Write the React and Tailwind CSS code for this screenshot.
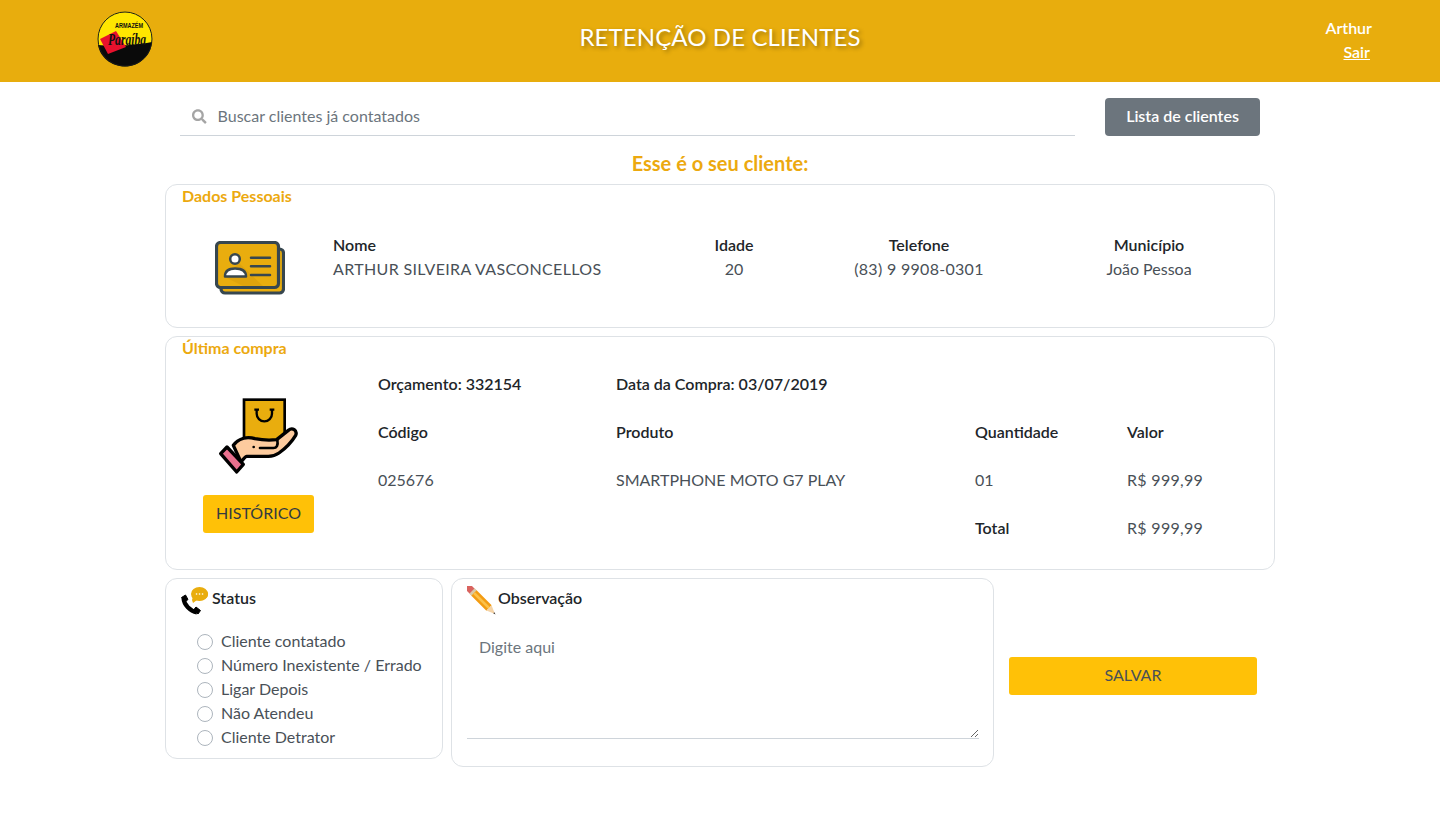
import { FaSearch } from "react-icons/fa";

const Logo = () => (
	<svg width="56" height="56" viewBox="0 0 56 56" className="overflow-visible">
		<circle cx="28" cy="28" r="27.5" fill="#ffe600" />
		<path d="M1 34 C14 35 34 35 55 31 C54 45 42 55.5 28 55.5 C14 55.5 3 46 1 34 Z" fill="#0a0a0a" />
		<circle cx="28" cy="28" r="27" fill="none" stroke="#1a1a1a" strokeWidth="1" />
		<polygon points="3,28 19,20 29,36 11,43" fill="#e8112d" />
		<text x="18" y="17" fontFamily="Liberation Sans" fontWeight="700" fontSize="7" textLength="28" lengthAdjust="spacingAndGlyphs" fill="#111">
			ARMAZÉM
		</text>
		<text x="11" y="34" fontFamily="Liberation Serif" fontStyle="italic" fontWeight="700" fontSize="16" textLength="38" lengthAdjust="spacingAndGlyphs" fill="#111">
			Paraíba
		</text>
	</svg>
);

const CardIcon = () => (
	<svg width="70" height="54" viewBox="0 0 70 54">
		<rect x="6" y="8" width="62.5" height="44" rx="4" fill="#e9ad0e" stroke="#37474f" strokeWidth="3.2" />
		<rect x="1.5" y="1.5" width="62" height="45" rx="4" fill="#e9ad0e" stroke="#37474f" strokeWidth="3.2" />
		<path d="M24 22 L48 45 L28 45 L10 36 Z" fill="#dfa30c" />
		<path d="M10 35.5 C10 29.5 14 27.5 20 27.5 C27 27.5 31 29.5 31 35.5 Z" fill="#fff" stroke="#37474f" strokeWidth="2.5" strokeLinejoin="round" />
		<circle cx="20" cy="18" r="4.8" fill="#fff" stroke="#37474f" strokeWidth="2.5" />
		<path d="M36 16.7 H55 M36 25.3 H55 M36 34 H55" stroke="#37474f" strokeWidth="2.5" strokeLinecap="round" />
	</svg>
);

const HandIcon = () => (
	<svg width="110" height="90" viewBox="0 0 330 270">
		<rect x="117" y="38" width="122" height="125" fill="#e9ad0e" stroke="#000" strokeWidth="8" />
		<path d="M148 68 H162 M194 68 H208 M155 68 V80 A23 23 0 0 0 201 80 V68" fill="none" stroke="#000" strokeWidth="7" />
		<path
			d="M85 175 C100 155 125 148 150 155 C175 160 195 160 215 158 L250 130 C262 120 278 130 272 145 C260 165 240 185 222 198 C212 205 200 208 190 208 L125 208 C120 208 112 222 108 225 Z"
			fill="#fdcb9e"
			stroke="#000"
			strokeWidth="10"
			strokeLinejoin="round"
		/>
		<path d="M165 183 H205 C215 183 220 175 217 160" fill="none" stroke="#000" strokeWidth="8" strokeLinecap="round" />
		<circle cx="146" cy="180" r="4" fill="#000" />
		<polygon points="66,180 115,232 95,255 47,200" fill="#e9708e" stroke="#000" strokeWidth="10" strokeLinejoin="round" />
	</svg>
);

const PhoneIcon = () => (
	<svg width="30" height="30" viewBox="0 0 30 30" className="shrink-0">
		<path d="M12 14 C15 7 10 7 19 4 C24 2 29 5 28 9 C27 13 22 15 17 14 L13 17 Z" fill="#e9ad0e" />
		<ellipse cx="19.5" cy="8" rx="8.5" ry="7" fill="#e9ad0e" />
		<path d="M16.5 8 h.1 M19.5 8 h.1 M22.5 8 h.1" stroke="#fff" strokeWidth="1.6" strokeLinecap="round" />
		<path d="M3.5 12 C4 19 10 25 17 26.5" fill="none" stroke="#000" strokeWidth="4.2" />
		<path d="M1.5 11.5 L5.5 9 L8 13.5 L5 16 Z M13.5 24 L16 21 L20.5 24.5 L18 28 Z" fill="#000" stroke="#000" strokeWidth="1" strokeLinejoin="round" />
	</svg>
);

const PencilIcon = () => (
	<svg width="30" height="30" viewBox="0 0 30 30" className="shrink-0">
		<line x1="2.5" y1="2.5" x2="5.5" y2="5.5" stroke="#d9635f" strokeWidth="7" strokeLinecap="round" />
		<line x1="5" y1="5" x2="7.5" y2="7.5" stroke="#d9c9a6" strokeWidth="7.5" />
		<line x1="7" y1="7" x2="22" y2="22" stroke="#f39c12" strokeWidth="7.5" />
		<line x1="7" y1="7" x2="22" y2="22" stroke="#fbc14a" strokeWidth="2.5" />
		<polygon points="19.4,24.6 24.6,19.4 28,28" fill="#f4d3a7" />
		<polygon points="26.3,27.3 27.3,26.3 28.5,28.5" fill="#222" />
	</svg>
);

const Card = ({ title, className, children }) => (
	<section className={`rounded-xl border border-[#dee2e6] ${className}`}>
		<h2 className="pl-4 text-base leading-[22px] font-bold text-[#eca90f]">{title}</h2>
		{children}
	</section>
);

const Field = ({ label, value, className, valueClass }) => (
	<div className={className}>
		<p className="leading-6 font-semibold text-[#212529]">{label}</p>
		<p className={`leading-6 ${valueClass}`}>{value}</p>
	</div>
);

const radios = ["Cliente contatado", "Número Inexistente / Errado", "Ligar Depois", "Não Atendeu", "Cliente Detrator"];

const Status = () => (
	<section className="h-[181px] w-[278px] rounded-xl border border-[#dee2e6] pl-[14px]">
		<div className="flex items-start gap-[2px] pt-[7px]">
			<PhoneIcon />
			<h3 className="font-semibold leading-6 text-[#212529]">Status</h3>
		</div>
		<div className="mt-[14px] flex flex-col pl-[17px]">
			{radios.map((label) => (
				<label key={label} className="flex h-6 items-center gap-2">
					<input type="radio" name="status" className="h-4 w-4 appearance-none rounded-full border border-[#adb5bd] bg-white" />
					<span className="pb-[2px] leading-6">{label}</span>
				</label>
			))}
		</div>
	</section>
);

const Observacao = () => (
	<section className="h-[189px] w-[543px] rounded-xl border border-[#dee2e6] pl-[15px]">
		<div className="flex items-start gap-[1px] pt-[7px]">
			<PencilIcon />
			<h3 className="font-semibold leading-6 text-[#212529]">Observação</h3>
		</div>
		<textarea
			placeholder="Digite aqui"
			className="mt-[12px] block h-[111px] w-[512px] border-b border-[#ced4da] py-[7px] pr-3 pl-3 leading-6 outline-none placeholder:text-[#6c757d]"
		/>
	</section>
);

const App = () => {
	return (
		<div className="min-h-[815px] bg-white font-['Lato',sans-serif] text-base text-[#495057]">
			<header className="grid h-[82px] grid-cols-3 items-center bg-[#e8ad0d]">
				<div className="pb-[4px] pl-[97px]">
					<Logo />
				</div>
				<h1 className="pb-[8px] text-center text-2xl tracking-[0.1px] whitespace-nowrap text-white [text-shadow:2px_2px_4px_rgba(0,0,0,0.35)]">
					RETENÇÃO DE CLIENTES
				</h1>
				<div className="flex flex-col items-end pr-[68px] pb-[2px] font-semibold text-white">
					<span className="leading-6">Arthur</span>
					<a className="pr-[2px] leading-6 underline">Sair</a>
				</div>
			</header>

			<main className="mx-auto w-[1110px]">
				<div className="flex items-center pt-4 pl-[15px]">
					<div className="flex h-[38px] w-[895px] items-center gap-[11px] border-b border-[#ced4da] pl-3 text-[#6c757d]">
						<FaSearch className="text-[15px] text-[#a5a5a5]" />
						<input placeholder="Buscar clientes já contatados" className="w-full pb-[2px] leading-6 outline-none placeholder:text-[#6c757d]" />
					</div>
					<button className="ml-[30px] h-[38px] w-[155px] rounded bg-[#6c757d] pb-[2px] font-semibold text-white">Lista de clientes</button>
				</div>

				<h2 className="mt-[13px] text-center text-xl leading-[28px] font-bold text-[#eca90f]">Esse é o seu cliente:</h2>

				<Card title="Dados Pessoais" className="mt-[7px] h-[144px]">
					<div className="mt-[26px] flex items-start">
						<div className="flex w-[167px] justify-center pt-[8px] pl-[1px]">
							<CardIcon />
						</div>
						<Field label="Nome" value="ARTHUR SILVEIRA VASCONCELLOS" valueClass="tracking-[0.35px]" className="w-[351px]" />
						<Field label="Idade" value="20" className="w-[100px] text-center" />
						<Field label="Telefone" value="(83) 9 9908-0301" valueClass="tracking-[0.3px]" className="w-[270px] text-center" />
						<Field label="Município" value="João Pessoa" className="w-[190px] text-center" />
					</div>
				</Card>

				<Card title="Última compra" className="mt-2 h-[234px]">
					<div className="flex items-start">
						<div className="flex w-[185px] flex-col items-center">
							<div className="mt-[28px] ml-[2px] flex h-[90px] w-[110px]">
								<HandIcon />
							</div>
							<button className="mt-[18px] h-[38px] w-[111px] rounded-[3px] bg-[#ffc107] pb-[2px] text-[#343a40]">HISTÓRICO</button>
						</div>
						<div className="mt-px ml-[27px] grid auto-rows-[48px] grid-cols-[238px_359px_152px_1fr] items-center">
							<span className="font-semibold text-[#212529]">Orçamento: 332154</span>
							<span className="col-span-3 font-semibold text-[#212529]">Data da Compra: 03/07/2019</span>
							<span className="font-semibold text-[#212529]">Código</span>
							<span className="font-semibold text-[#212529]">Produto</span>
							<span className="font-semibold text-[#212529]">Quantidade</span>
							<span className="font-semibold text-[#212529]">Valor</span>
							<span>025676</span>
							<span>SMARTPHONE MOTO G7 PLAY</span>
							<span>01</span>
							<span className="tracking-[0.3px]">R$ 999,99</span>
							<span className="col-start-3 font-semibold text-[#212529]">Total</span>
							<span className="tracking-[0.3px]">R$ 999,99</span>
						</div>
					</div>
				</Card>

				<div className="mt-2 flex items-start gap-2">
					<Status />
					<Observacao />
					<button className="mt-[79px] ml-[7px] h-[38px] w-[248px] rounded-[3px] bg-[#ffc107] pb-[2px] text-[#495057]">SALVAR</button>
				</div>
			</main>
		</div>
	);
};

export default App;
